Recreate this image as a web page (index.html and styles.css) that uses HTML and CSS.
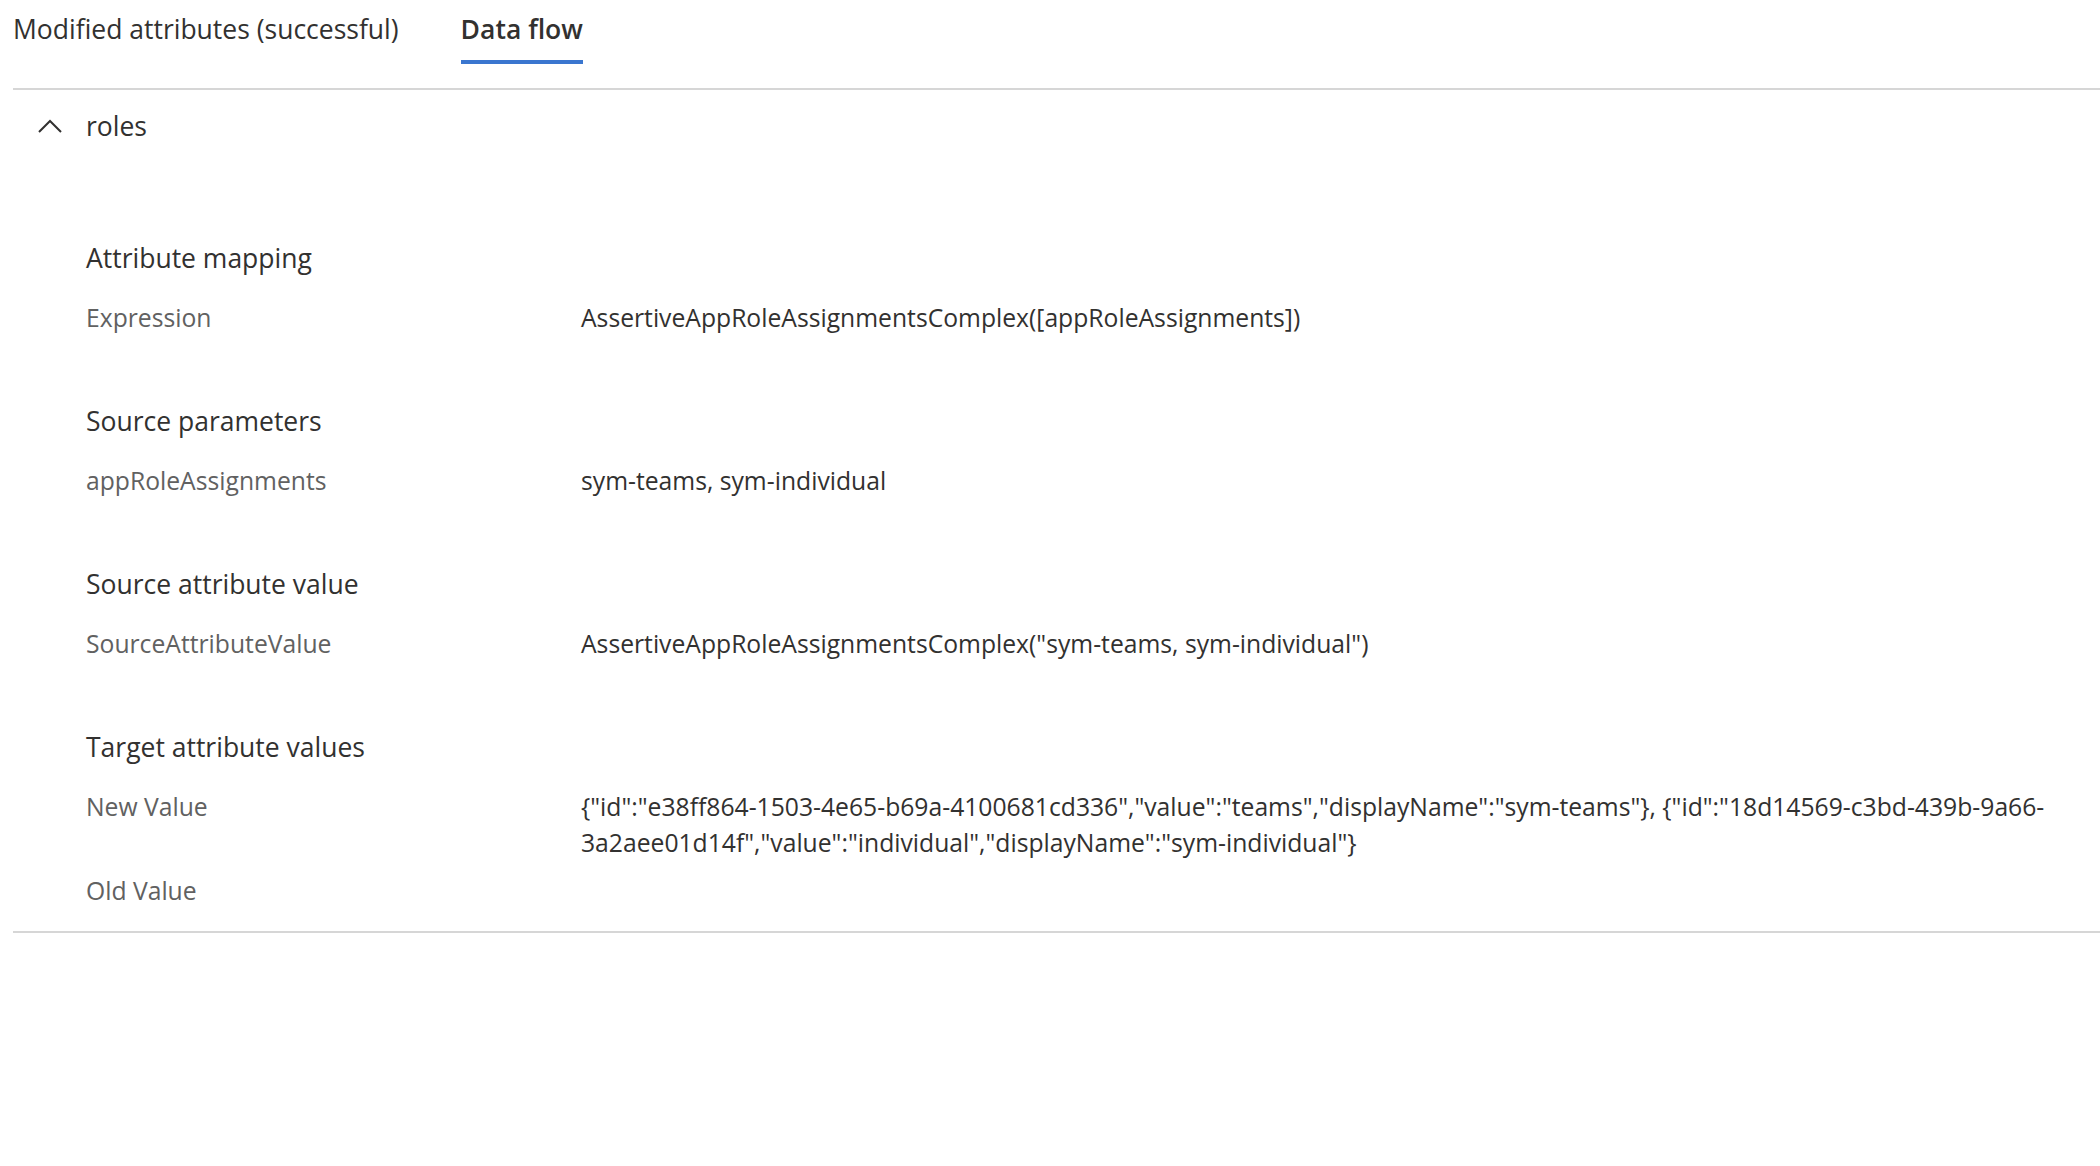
FILE: index.html
```html
<!DOCTYPE html>
<html>
<head>
    <title>Provisioning log details</title>
    <link rel="stylesheet" href="styles.css">
</head>
<body>
<div class="tabs">
    <div class="tab">Modified attributes (successful)</div>
    <div class="tab active">Data flow</div>
</div>

<div class="accordion">
    <div class="acc-head">
        <svg class="chevron" width="26" height="16" viewBox="0 0 26 16">
            <path d="M2 14 L13 3 L24 14" fill="none" stroke="#323130" stroke-width="2"/>
        </svg>
        <span class="acc-title">roles</span>
    </div>

    <div class="acc-body">
        <div class="section first">
            <div class="section-title">Attribute mapping</div>
            <div class="row">
                <div class="label">Expression</div>
                <div class="value">AssertiveAppRoleAssignmentsComplex([appRoleAssignments])</div>
            </div>
        </div>

        <div class="section">
            <div class="section-title">Source parameters</div>
            <div class="row">
                <div class="label">appRoleAssignments</div>
                <div class="value">sym-teams, sym-individual</div>
            </div>
        </div>

        <div class="section">
            <div class="section-title">Source attribute value</div>
            <div class="row">
                <div class="label">SourceAttributeValue</div>
                <div class="value">AssertiveAppRoleAssignmentsComplex("sym-teams, sym-individual")</div>
            </div>
        </div>

        <div class="section">
            <div class="section-title">Target attribute values</div>
            <div class="row">
                <div class="label">New Value</div>
                <div class="value">{"id":"e38ff864-1503-4e65-b69a-4100681cd336","value":"teams","displayName":"sym-teams"}, {"id":"18d14569-c3bd-439b-9a66-3a2aee01d14f","value":"individual","displayName":"sym-individual"}</div>
            </div>
            <div class="row tight">
                <div class="label">Old Value</div>
                <div class="value"></div>
            </div>
        </div>
    </div>
</div>
</body>
</html>
```

FILE: styles.css
```css
body {
    margin: 0;
    font-family: 'Open Sans', 'Noto Sans', sans-serif;
    color: #323130;
    background-color: #fff;
}

.tabs {
    display: flex;
    align-items: flex-start;
    gap: 62px;
    height: 88px;
    margin-left: 13px;
    border-bottom: 2px solid #d6d6d6;
}

.tab {
    font-size: 26.5px;
    line-height: 36px;
    padding-top: 11px;
    padding-bottom: 13px;
    border-bottom: 4px solid transparent;
}

.tab.active {
    font-weight: 600;
    border-bottom-color: #3a76cf;
}

.accordion {
    margin-left: 13px;
    padding-bottom: 22px;
    border-bottom: 2px solid #d6d6d6;
}

.acc-head {
    display: flex;
    align-items: center;
    gap: 23px;
    height: 71px;
    padding-left: 24px;
}

.acc-title {
    font-size: 26.5px;
    line-height: 36px;
}

.acc-body {
    padding-left: 73px;
    padding-right: 12px;
}

.section {
    margin-top: 67px;
}

.section.first {
    margin-top: 79px;
}

.section-title {
    font-size: 26.5px;
    line-height: 36px;
    margin-bottom: 24px;
}

.row {
    display: grid;
    grid-template-columns: 495px 1fr;
    font-size: 24.7px;
    line-height: 36px;
}

.row.tight {
    margin-top: 12px;
}

.label {
    color: #616161;
}

.value {
    color: #323130;
}
```
